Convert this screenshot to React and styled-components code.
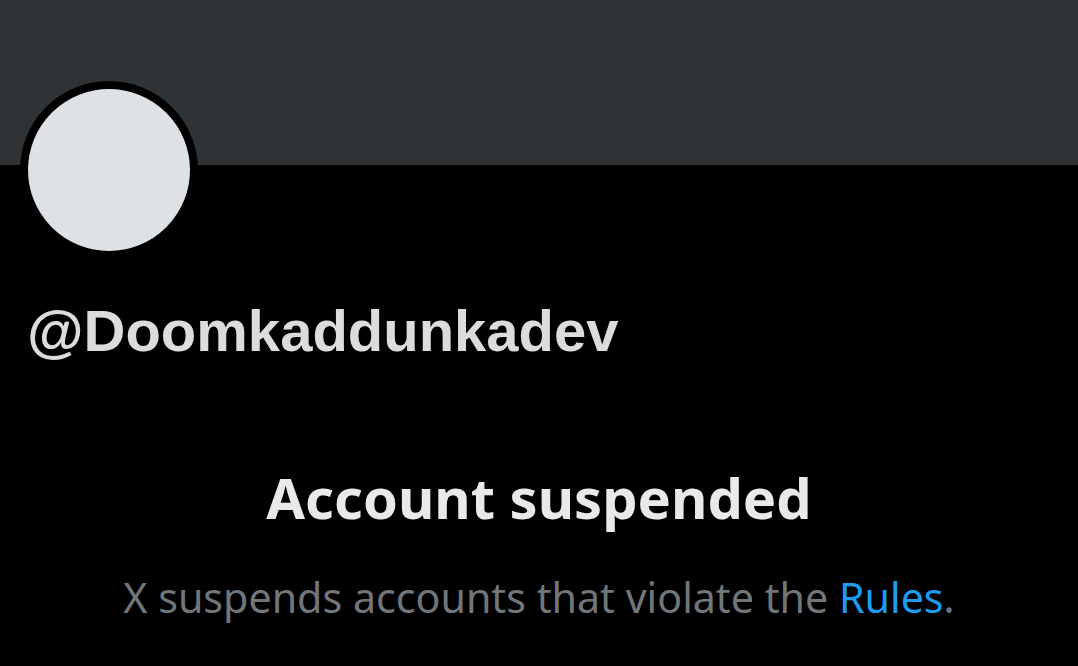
import React from "react";
import styled, { createGlobalStyle } from "styled-components";

const GlobalStyle = createGlobalStyle`
  html, body {
    margin: 0;
    padding: 0;
    background: #000;
  }
  body {
    width: 1078px;
    height: 666px;
    overflow: hidden;
    font-family: "Noto Sans", Roboto, sans-serif;
  }
`;

export default function App() {
  return (
    <>
      <GlobalStyle />
      <Page>
        <Banner />
        <ProfileTop>
          <Avatar />
        </ProfileTop>
        <Handle>@Doomkaddunkadev</Handle>
        <Notice>
          <NoticeTitle>Account suspended</NoticeTitle>
          <NoticeText>
            X suspends accounts that violate the <RulesLink>Rules</RulesLink>.
          </NoticeText>
        </Notice>
      </Page>
    </>
  );
}

const Page = styled.div`
  width: 1078px;
  height: 666px;
  background: #000;
  display: flex;
  flex-direction: column;
`;

const Banner = styled.div`
  height: 165px;
  background: #2f3336;
  flex-shrink: 0;
`;

const ProfileTop = styled.div`
  height: 94px;
  padding-left: 20px;
`;

const Avatar = styled.div`
  width: 162px;
  height: 162px;
  margin-top: -84px;
  border-radius: 50%;
  background: #dee2e6;
  border: 8px solid #000;
`;

const Handle = styled.div`
  margin-top: 38px;
  padding-left: 27px;
  font-family: "Liberation Sans", Arial, sans-serif;
  font-weight: 700;
  font-size: 58px;
  line-height: 68px;
  color: #dcdcdc;
`;

const Notice = styled.div`
  margin-top: 96px;
  display: flex;
  flex-direction: column;
  align-items: center;
`;

const NoticeTitle = styled.div`
  font-family: "Noto Sans", sans-serif;
  font-weight: 700;
  font-size: 56px;
  line-height: 72px;
  color: #e7e9ea;
`;

const NoticeText = styled.div`
  margin-top: 36px;
  font-family: "Noto Sans", sans-serif;
  font-size: 41.2px;
  line-height: 56px;
  color: #71767b;
`;

const RulesLink = styled.span`
  color: #1d9bf0;
`;
